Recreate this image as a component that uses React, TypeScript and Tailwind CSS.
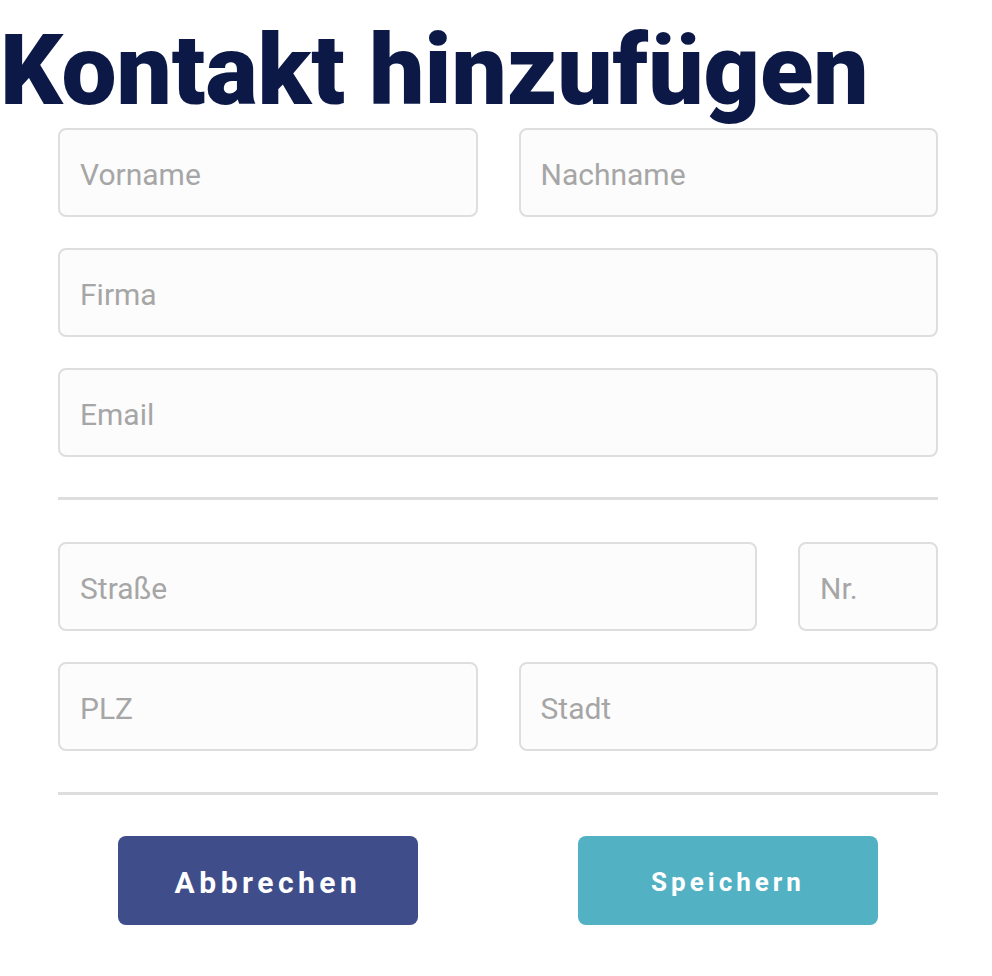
import React from "react";

const inputClass =
  "h-[89px] w-full rounded-[8px] border-2 border-[#dedede] bg-[#fcfcfc] px-[20px] pt-[4px] text-[30px] text-[#555] placeholder:text-[#a6a6a6] outline-none";

function Field({ placeholder, className = "" }: { placeholder: string; className?: string }) {
  return (
    <div className={className}>
      <input type="text" placeholder={placeholder} className={inputClass} />
    </div>
  );
}

export default function App() {
  return (
    <div className="min-h-screen bg-white font-['Roboto','Liberation_Sans',sans-serif]">
      <h1 className="pt-[11px] text-[#0c1947] font-black text-[98px] leading-[120px] tracking-[0px] whitespace-nowrap">
        Kontakt hinzufügen
      </h1>

      <div className="-mt-[3px] ml-[58px] w-[880px] flex flex-col">
        <div className="flex gap-[41px]">
          <Field placeholder="Vorname" className="flex-1" />
          <Field placeholder="Nachname" className="flex-1" />
        </div>
        <Field placeholder="Firma" className="mt-[31px]" />
        <Field placeholder="Email" className="mt-[31px]" />

        <div className="mt-[40px] h-[3px] bg-[#dedede]" />

        <div className="mt-[42px] flex gap-[41px]">
          <Field placeholder="Straße" className="flex-1" />
          <Field placeholder="Nr." className="w-[140px]" />
        </div>
        <div className="mt-[31px] flex gap-[41px]">
          <Field placeholder="PLZ" className="flex-1" />
          <Field placeholder="Stadt" className="flex-1" />
        </div>

        <div className="mt-[41px] h-[3px] bg-[#dedede]" />

        <div className="mt-[41px] flex justify-between px-[60px]">
          <button className="h-[89px] w-[300px] rounded-[8px] bg-[#3f4d8a] pt-[4px] text-white font-bold text-[30px] tracking-[4.5px]">
            Abbrechen
          </button>
          <button className="h-[89px] w-[300px] rounded-[8px] bg-[#53b1c4] pt-[4px] text-white font-bold text-[26px] tracking-[4px]">
            Speichern
          </button>
        </div>
      </div>
    </div>
  );
}
